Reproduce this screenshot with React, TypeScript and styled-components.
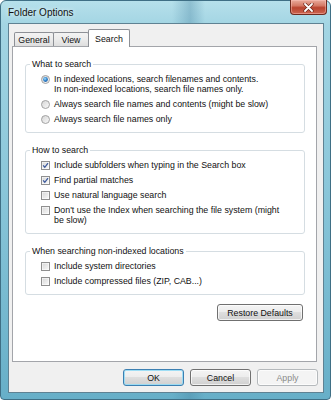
import styled, { createGlobalStyle } from 'styled-components'

const GlobalStyle = createGlobalStyle`
  html, body {
    margin: 0;
    padding: 0;
    background: #ffffff;
  }
  body {
    font-family: 'Liberation Sans', Arial, sans-serif;
  }
`

const Window = styled.div`
  box-sizing: border-box;
  width: 331px;
  height: 400px;
  display: flex;
  flex-direction: column;
  padding: 0 6px 6px 7px;
  border: 1px solid #3f6f85;
  border-radius: 6px 6px 4px 4px;
  background:
    linear-gradient(90deg, rgba(70, 130, 160, 0) 52%, rgba(70, 130, 160, 0.35) 57.5%, rgba(70, 130, 160, 0) 62%),
    linear-gradient(180deg, #b6e0eb 0%, #a3d5e3 6%, #8bc7da 45%, #67afc8 100%);
`

const TitleBar = styled.div`
  height: 22px;
  display: flex;
  align-items: center;
  justify-content: space-between;
`

const Title = styled.span`
  font-size: 10px;
  color: #111;
  text-shadow: 0 0 4px rgba(255, 255, 255, 0.9);
`

const CloseButton = styled.div`
  align-self: flex-start;
  box-sizing: border-box;
  width: 37px;
  height: 15px;
  margin-top: -1px;
  margin-right: -3px;
  display: flex;
  align-items: center;
  justify-content: center;
  border: 1px solid #6e2a1e;
  border-top: 0;
  border-radius: 0 0 4px 4px;
  background: linear-gradient(180deg, #e9ab9b 0%, #d57a66 40%, #b9442f 55%, #cc6550 100%);
  box-shadow: inset 0 0 0 1px rgba(255, 200, 190, 0.45);
`

const Client = styled.div`
  flex: 1;
  display: flex;
  flex-direction: column;
  padding: 5px 6px 6px 3px;
  background: #f0f0f0;
  border: 1px solid #5f8293;
`

const TabStrip = styled.div`
  display: flex;
  align-items: flex-end;
  height: 18px;
  padding-left: 2px;
  margin-bottom: -1px;
`

const Tab = styled.div<{ $active?: boolean; $width: number }>`
  box-sizing: border-box;
  width: ${(p) => p.$width}px;
  height: ${(p) => (p.$active ? 18 : 14)}px;
  margin-bottom: ${(p) => (p.$active ? 0 : 1)}px;
  margin-left: -1px;
  display: flex;
  align-items: center;
  justify-content: center;
  font-size: 8.8px;
  color: #111;
  border: 1px solid #8d9096;
  border-bottom: 0;
  border-radius: 2px 2px 0 0;
  background: ${(p) =>
    p.$active ? '#ffffff' : 'linear-gradient(180deg, #f3f3f3 0%, #ebebeb 50%, #dedede 100%)'};
  position: ${(p) => (p.$active ? 'relative' : 'static')};
  z-index: ${(p) => (p.$active ? 1 : 0)};
  &:first-child {
    margin-left: 0;
  }
`

const Panel = styled.div`
  flex: 1;
  padding: 12px 11px 0 12px;
  background: #ffffff;
  border: 1px solid #a3a5aa;
`

const Group = styled.fieldset`
  margin: 0;
  min-width: 0;
  padding: 5px 8px 8px 15px;
  border: 1px solid #d5dde2;
  border-radius: 3px;
  display: flex;
  flex-direction: column;
  gap: 5px;
  & + & {
    margin-top: 12px;
  }
`

const Legend = styled.legend`
  margin-left: -11px;
  padding: 0 2px;
  font-size: 8.8px;
  line-height: 10px;
  color: #111;
`

const Option = styled.div`
  display: flex;
  align-items: flex-start;
  gap: 4px;
  font-size: 8.8px;
  line-height: 10px;
  color: #111;
  & > svg {
    flex: none;
    margin-top: 0.5px;
  }
`

const RestoreRow = styled.div`
  display: flex;
  justify-content: flex-end;
  margin-top: 9px;
  padding-right: 2px;
`

const ButtonRow = styled.div`
  display: flex;
  justify-content: flex-end;
  gap: 6px;
  margin-top: 7px;
  margin-right: -1px;
`

const Button = styled.div<{ $default?: boolean; $disabled?: boolean; $width: number }>`
  box-sizing: border-box;
  width: ${(p) => p.$width}px;
  height: 17px;
  display: flex;
  align-items: center;
  justify-content: center;
  font-size: 8.8px;
  color: ${(p) => (p.$disabled ? '#8a8a8a' : '#111')};
  border-radius: 3px;
  border: 1px solid ${(p) => (p.$default ? '#3c7fb1' : p.$disabled ? '#b5b9bc' : '#707070')};
  background: ${(p) =>
    p.$disabled
      ? '#f4f4f4'
      : 'linear-gradient(180deg, #f4f4f4 0%, #ececec 50%, #dedede 50%, #d0d0d0 100%)'};
  box-shadow: inset 0 0 0 1px
    ${(p) => (p.$default ? 'rgba(150, 220, 245, 0.9)' : 'rgba(255, 255, 255, 0.7)')};
`

function Radio({ checked }: { checked?: boolean }) {
  return (
    <svg width="9" height="9" viewBox="0 0 9 9">
      <defs>
        <linearGradient id="rbg" x1="0" y1="0" x2="1" y2="1">
          <stop offset="0" stopColor="#d4d4d4" />
          <stop offset="1" stopColor="#fbfbfb" />
        </linearGradient>
        <radialGradient id="rdot" cx="0.4" cy="0.35" r="0.7">
          <stop offset="0" stopColor="#a9e0fb" />
          <stop offset="0.5" stopColor="#3b8fd6" />
          <stop offset="1" stopColor="#17569e" />
        </radialGradient>
      </defs>
      <circle cx="4.5" cy="4.5" r="4" fill="url(#rbg)" stroke="#9a9a9a" strokeWidth="0.9" />
      {checked && <circle cx="4.5" cy="4.5" r="2.4" fill="url(#rdot)" />}
    </svg>
  )
}

function Check({ checked }: { checked?: boolean }) {
  return (
    <svg width="9" height="9" viewBox="0 0 9 9">
      <defs>
        <linearGradient id="cbg" x1="0" y1="0" x2="1" y2="1">
          <stop offset="0" stopColor="#d8d8d8" />
          <stop offset="1" stopColor="#f7f7f7" />
        </linearGradient>
      </defs>
      <rect x="0.5" y="0.5" width="8" height="8" fill="#ffffff" stroke="#8f8f8f" />
      <rect x="1.5" y="1.5" width="6" height="6" fill="url(#cbg)" />
      {checked && (
        <path d="M2.1 4.4 L3.8 6.3 L7 2.2" fill="none" stroke="#3d5a9c" strokeWidth="1.3" />
      )}
    </svg>
  )
}

function CloseGlyph() {
  return (
    <svg width="11" height="9" viewBox="0 0 11 9">
      <path d="M2 1 L9 8 M9 1 L2 8" stroke="#6a2418" strokeWidth="3.2" strokeLinecap="round" />
      <path d="M2 1 L9 8 M9 1 L2 8" stroke="#ffffff" strokeWidth="1.8" strokeLinecap="round" />
    </svg>
  )
}

export default function App() {
  return (
    <>
      <GlobalStyle />
      <Window>
        <TitleBar>
          <Title>Folder Options</Title>
          <CloseButton>
            <CloseGlyph />
          </CloseButton>
        </TitleBar>
        <Client>
          <TabStrip>
            <Tab $width={40}>General</Tab>
            <Tab $width={36}>View</Tab>
            <Tab $width={42} $active>
              Search
            </Tab>
          </TabStrip>
          <Panel>
            <Group>
              <Legend>What to search</Legend>
              <Option>
                <Radio checked />
                <span>
                  In indexed locations, search filenames and contents.
                  <br />
                  In non-indexed locations, search file names only.
                </span>
              </Option>
              <Option>
                <Radio />
                <span>Always search file names and contents (might be slow)</span>
              </Option>
              <Option>
                <Radio />
                <span>Always search file names only</span>
              </Option>
            </Group>
            <Group>
              <Legend>How to search</Legend>
              <Option>
                <Check checked />
                <span>Include subfolders when typing in the Search box</span>
              </Option>
              <Option>
                <Check checked />
                <span>Find partial matches</span>
              </Option>
              <Option>
                <Check />
                <span>Use natural language search</span>
              </Option>
              <Option>
                <Check />
                <span>
                  Don't use the Index when searching the file system (might
                  <br />
                  be slow)
                </span>
              </Option>
            </Group>
            <Group>
              <Legend>When searching non-indexed locations</Legend>
              <Option>
                <Check />
                <span>Include system directories</span>
              </Option>
              <Option>
                <Check />
                <span>Include compressed files (ZIP, CAB...)</span>
              </Option>
            </Group>
            <RestoreRow>
              <Button $width={86}>Restore Defaults</Button>
            </RestoreRow>
          </Panel>
          <ButtonRow>
            <Button $width={61} $default>
              OK
            </Button>
            <Button $width={61}>Cancel</Button>
            <Button $width={61} $disabled>
              Apply
            </Button>
          </ButtonRow>
        </Client>
      </Window>
    </>
  )
}
